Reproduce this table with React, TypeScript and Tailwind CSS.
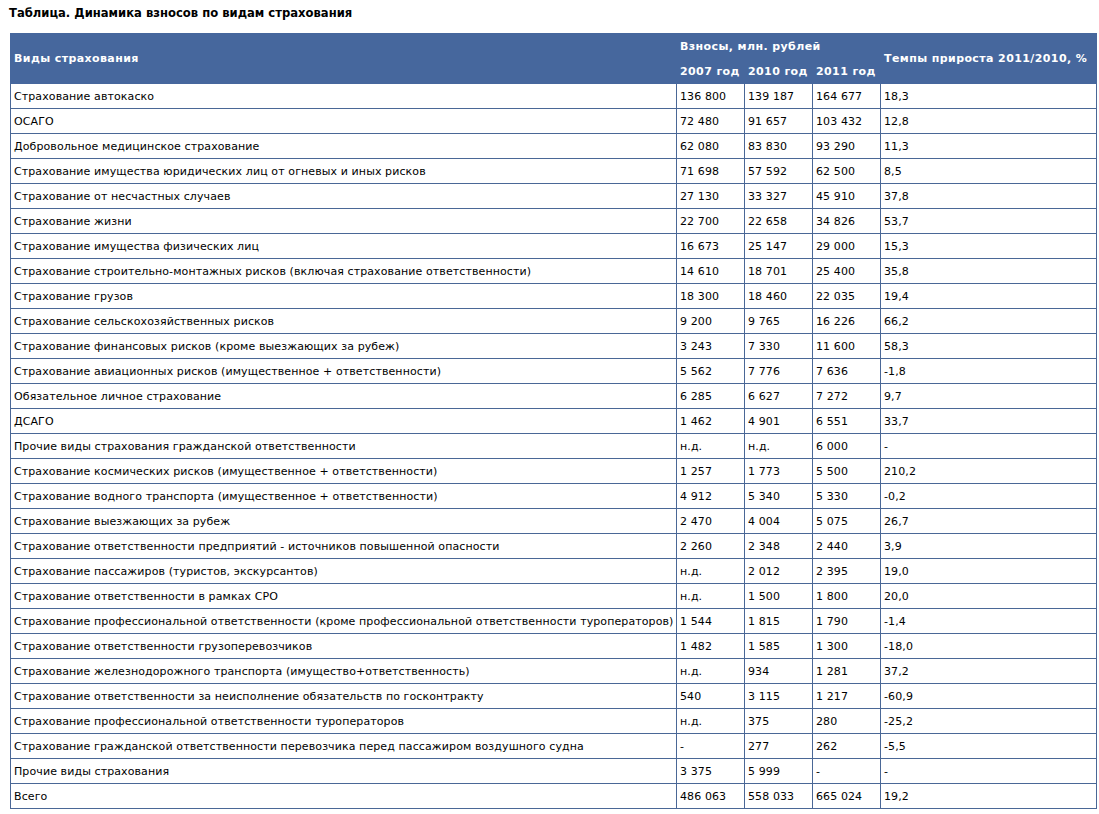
import React from "react";

const rows: [string, string, string, string, string][] = [
  ["Страхование автокаско", "136 800", "139 187", "164 677", "18,3"],
  ["ОСАГО", "72 480", "91 657", "103 432", "12,8"],
  ["Добровольное медицинское страхование", "62 080", "83 830", "93 290", "11,3"],
  ["Страхование имущества юридических лиц от огневых и иных рисков", "71 698", "57 592", "62 500", "8,5"],
  ["Страхование от несчастных случаев", "27 130", "33 327", "45 910", "37,8"],
  ["Страхование жизни", "22 700", "22 658", "34 826", "53,7"],
  ["Страхование имущества физических лиц", "16 673", "25 147", "29 000", "15,3"],
  ["Страхование строительно-монтажных рисков (включая страхование ответственности)", "14 610", "18 701", "25 400", "35,8"],
  ["Страхование грузов", "18 300", "18 460", "22 035", "19,4"],
  ["Страхование сельскохозяйственных рисков", "9 200", "9 765", "16 226", "66,2"],
  ["Страхование финансовых рисков (кроме выезжающих за рубеж)", "3 243", "7 330", "11 600", "58,3"],
  ["Страхование авиационных рисков (имущественное + ответственности)", "5 562", "7 776", "7 636", "-1,8"],
  ["Обязательное личное страхование", "6 285", "6 627", "7 272", "9,7"],
  ["ДСАГО", "1 462", "4 901", "6 551", "33,7"],
  ["Прочие виды страхования гражданской ответственности", "н.д.", "н.д.", "6 000", "-"],
  ["Страхование космических рисков (имущественное + ответственности)", "1 257", "1 773", "5 500", "210,2"],
  ["Страхование водного транспорта (имущественное + ответственности)", "4 912", "5 340", "5 330", "-0,2"],
  ["Страхование выезжающих за рубеж", "2 470", "4 004", "5 075", "26,7"],
  ["Страхование ответственности предприятий - источников повышенной опасности", "2 260", "2 348", "2 440", "3,9"],
  ["Страхование пассажиров (туристов, экскурсантов)", "н.д.", "2 012", "2 395", "19,0"],
  ["Страхование ответственности в рамках СРО", "н.д.", "1 500", "1 800", "20,0"],
  ["Страхование профессиональной ответственности (кроме профессиональной ответственности туроператоров)", "1 544", "1 815", "1 790", "-1,4"],
  ["Страхование ответственности грузоперевозчиков", "1 482", "1 585", "1 300", "-18,0"],
  ["Страхование железнодорожного транспорта (имущество+ответственность)", "н.д.", "934", "1 281", "37,2"],
  ["Страхование ответственности за неисполнение обязательств по госконтракту", "540", "3 115", "1 217", "-60,9"],
  ["Страхование профессиональной ответственности туроператоров", "н.д.", "375", "280", "-25,2"],
  ["Страхование гражданской ответственности перевозчика перед пассажиром воздушного судна", "-", "277", "262", "-5,5"],
  ["Прочие виды страхования", "3 375", "5 999", "-", "-"],
  ["Всего", "486 063", "558 033", "665 024", "19,2"],
];

const th = "border border-[#46679d] px-[3px] pt-[2px] pb-0 text-left align-middle font-bold whitespace-nowrap tracking-[0.4px]";

export default function App() {
  return (
    <div className="bg-white min-h-[814px] text-[11px] text-black" style={{ fontFamily: '"DejaVu Sans", Verdana, sans-serif' }}>
      <div className="h-[33px] pl-[9px] pt-[5px] text-[11.6px] font-bold leading-[16px]">
        Таблица. Динамика взносов по видам страхования
      </div>
      <table className="ml-[10px] w-[1087px] table-fixed border-collapse">
        <colgroup>
          <col className="w-[666px]" />
          <col className="w-[68px]" />
          <col className="w-[68px]" />
          <col className="w-[68px]" />
          <col />
        </colgroup>
        <thead>
          <tr className="h-[25px] bg-[#46679d] text-white">
            <th rowSpan={2} className={th}>Виды страхования</th>
            <th colSpan={3} className={th}>Взносы, млн. рублей</th>
            <th rowSpan={2} className={th}>Темпы прироста 2011/2010, %</th>
          </tr>
          <tr className="h-[25px] bg-[#46679d] text-white">
            <th className={th}>2007 год</th>
            <th className={th}>2010 год</th>
            <th className={th}>2011 год</th>
          </tr>
        </thead>
        <tbody>
          {rows.map((r, i) => (
            <tr key={i} className="h-[25px]">
              {r.map((c, j) => (
                <td key={j} className="border border-[#4a6796] px-[3px] pt-[2px] pb-0 align-middle whitespace-nowrap tracking-[0.1px]">
                  {c}
                </td>
              ))}
            </tr>
          ))}
        </tbody>
      </table>
    </div>
  );
}
